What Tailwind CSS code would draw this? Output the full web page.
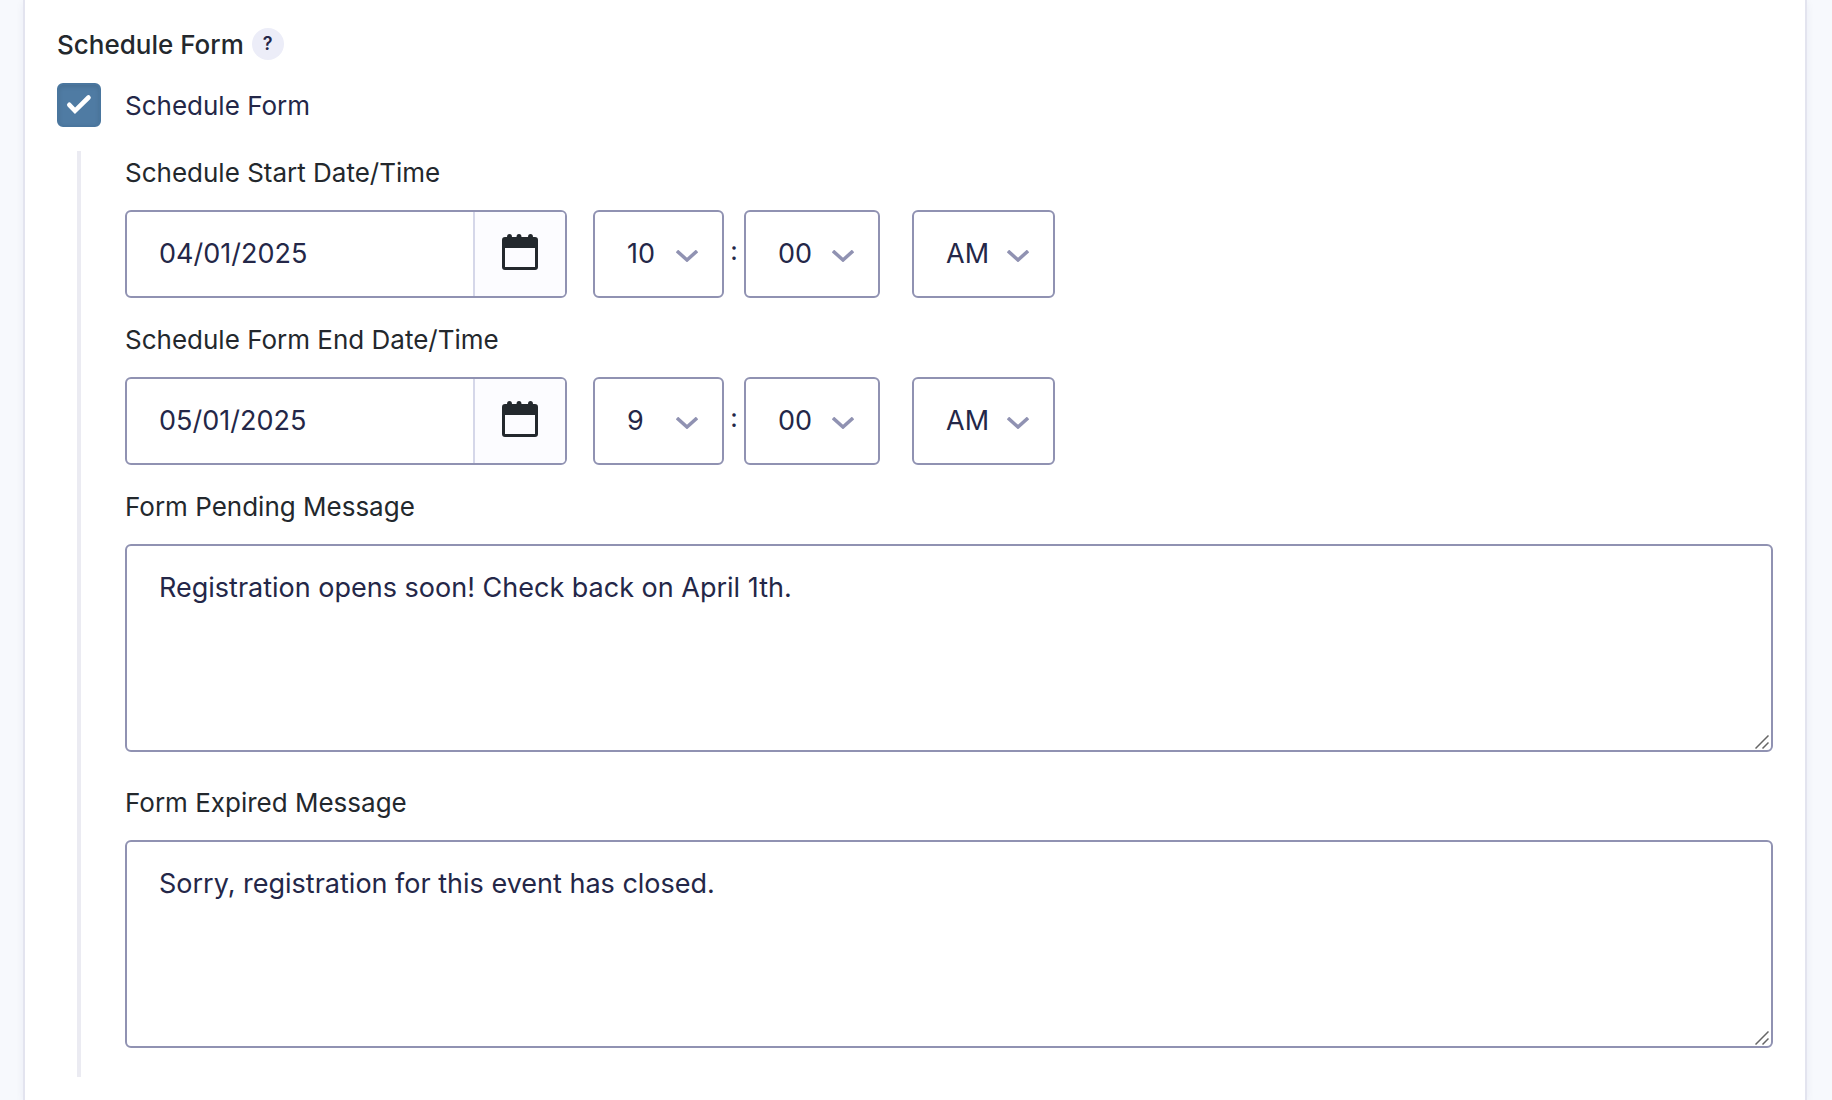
<!DOCTYPE html>
<html lang="en">
<head>
    <meta charset="UTF-8">
    <meta name="viewport" content="width=device-width, initial-scale=1.0">
    <title>Schedule Form</title>
    <script src="https://cdn.jsdelivr.net/npm/@tailwindcss/browser@4"></script>
</head>
<body class="bg-[#f7f9fd] pl-[23px] pr-[25px] font-[Inter,sans-serif] text-[#242748]">
    <main class="min-h-screen bg-white border-x-2 border-[#e3e4ef] shadow-[0_2px_8px_rgba(18,25,97,0.06)] px-8 pt-7 pb-5">

        <div class="flex items-center gap-2 h-8">
            <h1 class="pt-0.5 text-[26px] leading-8 font-medium text-[#23282d]">Schedule Form</h1>
            <button type="button" aria-label="Help" class="size-8 rounded-full bg-[#ecedf8] text-[18px] leading-8 font-semibold text-center">?</button>
        </div>

        <div class="flex items-center gap-6 mt-[23px]">
            <div class="relative size-11">
                <input type="checkbox" id="schedule" checked class="block size-11 appearance-none rounded-md bg-[#4f7ba3] border-2 border-[#4a769e] shadow-[inset_0_2px_4px_rgba(0,0,0,0.1)]">
                <svg class="absolute inset-0 size-11 pointer-events-none" viewBox="0 0 44 44" fill="none" stroke="#fff" stroke-width="4.6" stroke-linecap="round">
                    <path d="M12.3 21.8L18 27.8L31.5 14.5"/>
                </svg>
            </div>
            <label for="schedule" class="pt-0.5 text-[26px] leading-[30px]">Schedule Form</label>
        </div>

        <div class="mt-6 ml-5 border-l-4 border-[#ebebf2] pl-11 pt-[7px] pb-[29px]">

            <!-- Start date -->
            <label for="start-date" class="block text-[26px] leading-[30px] text-[#23282d]">Schedule Start Date/Time</label>
            <div class="flex items-center mt-[22px] text-[27px]">
                <div class="flex w-[442px] h-[88px] rounded-md border-2 border-[#9092b2] overflow-hidden">
                    <input type="text" id="start-date" value="04/01/2025" class="flex-1 min-w-0 px-8 outline-none">
                    <button type="button" aria-label="Pick start date" class="flex items-center justify-center w-[92px] border-l-2 border-[#d5d7e9] bg-[#fcfcff] pb-1">
                        <svg class="size-9" viewBox="0 0 36 36" fill="#23282d">
                            <path fill-rule="evenodd" d="M3 3H5A2.5 3 0 0 1 10 3H14.5A2.5 3 0 0 1 19.5 3H26A2.5 3 0 0 1 31 3H33A3 3 0 0 1 36 6V33A3 3 0 0 1 33 36H3A3 3 0 0 1 0 33V6A3 3 0 0 1 3 3ZM3 14V33H33V14Z"/>
                        </svg>
                    </button>
                </div>
                <div class="relative ml-[26px]">
                    <select aria-label="Start hour" class="block w-[131px] h-[88px] pl-8 appearance-none rounded-md border-2 border-[#9092b2] bg-white"><option>10</option></select>
                    <svg class="absolute right-[26px] top-10 w-[22px] h-3 pointer-events-none" viewBox="0 0 22 12" fill="none" stroke="#9092b2" stroke-width="3.5"><path d="M1 1L11 10L21 1"/></svg>
                </div>
                <span class="w-5 pb-2 text-center text-[26px]">:</span>
                <div class="relative">
                    <select aria-label="Start minute" class="block w-[136px] h-[88px] pl-8 appearance-none rounded-md border-2 border-[#9092b2] bg-white"><option>00</option></select>
                    <svg class="absolute right-[26px] top-10 w-[22px] h-3 pointer-events-none" viewBox="0 0 22 12" fill="none" stroke="#9092b2" stroke-width="3.5"><path d="M1 1L11 10L21 1"/></svg>
                </div>
                <div class="relative ml-8">
                    <select aria-label="Start AM or PM" class="block w-[143px] h-[88px] pl-8 appearance-none rounded-md border-2 border-[#9092b2] bg-white"><option>AM</option><option>PM</option></select>
                    <svg class="absolute right-[26px] top-10 w-[22px] h-3 pointer-events-none" viewBox="0 0 22 12" fill="none" stroke="#9092b2" stroke-width="3.5"><path d="M1 1L11 10L21 1"/></svg>
                </div>
            </div>

            <!-- End date -->
            <label for="end-date" class="block mt-[27px] text-[26px] leading-[30px] text-[#23282d]">Schedule Form End Date/Time</label>
            <div class="flex items-center mt-[22px] text-[27px]">
                <div class="flex w-[442px] h-[88px] rounded-md border-2 border-[#9092b2] overflow-hidden">
                    <input type="text" id="end-date" value="05/01/2025" class="flex-1 min-w-0 px-8 outline-none">
                    <button type="button" aria-label="Pick end date" class="flex items-center justify-center w-[92px] border-l-2 border-[#d5d7e9] bg-[#fcfcff] pb-1">
                        <svg class="size-9" viewBox="0 0 36 36" fill="#23282d">
                            <path fill-rule="evenodd" d="M3 3H5A2.5 3 0 0 1 10 3H14.5A2.5 3 0 0 1 19.5 3H26A2.5 3 0 0 1 31 3H33A3 3 0 0 1 36 6V33A3 3 0 0 1 33 36H3A3 3 0 0 1 0 33V6A3 3 0 0 1 3 3ZM3 14V33H33V14Z"/>
                        </svg>
                    </button>
                </div>
                <div class="relative ml-[26px]">
                    <select aria-label="End hour" class="block w-[131px] h-[88px] pl-8 appearance-none rounded-md border-2 border-[#9092b2] bg-white"><option>9</option></select>
                    <svg class="absolute right-[26px] top-10 w-[22px] h-3 pointer-events-none" viewBox="0 0 22 12" fill="none" stroke="#9092b2" stroke-width="3.5"><path d="M1 1L11 10L21 1"/></svg>
                </div>
                <span class="w-5 pb-2 text-center text-[26px]">:</span>
                <div class="relative">
                    <select aria-label="End minute" class="block w-[136px] h-[88px] pl-8 appearance-none rounded-md border-2 border-[#9092b2] bg-white"><option>00</option></select>
                    <svg class="absolute right-[26px] top-10 w-[22px] h-3 pointer-events-none" viewBox="0 0 22 12" fill="none" stroke="#9092b2" stroke-width="3.5"><path d="M1 1L11 10L21 1"/></svg>
                </div>
                <div class="relative ml-8">
                    <select aria-label="End AM or PM" class="block w-[143px] h-[88px] pl-8 appearance-none rounded-md border-2 border-[#9092b2] bg-white"><option>AM</option><option>PM</option></select>
                    <svg class="absolute right-[26px] top-10 w-[22px] h-3 pointer-events-none" viewBox="0 0 22 12" fill="none" stroke="#9092b2" stroke-width="3.5"><path d="M1 1L11 10L21 1"/></svg>
                </div>
            </div>

            <!-- Messages -->
            <label for="pending" class="block mt-[27px] text-[26px] leading-[30px] text-[#23282d]">Form Pending Message</label>
            <div class="relative mt-[22px]">
                <textarea id="pending" class="block w-full h-[208px] px-8 py-[22px] resize-none rounded-md border-2 border-[#9092b2] text-[27px] leading-10">Registration opens soon! Check back on April 1th.</textarea>
                <svg class="absolute right-1 bottom-[3px] size-[14px] pointer-events-none" viewBox="0 0 14 14" stroke="#666" stroke-width="1.5"><path d="M0.5 13.5L13.5 0.5M7.5 13.5L13.5 7.5"/></svg>
            </div>

            <label for="expired" class="block mt-9 text-[26px] leading-[30px] text-[#23282d]">Form Expired Message</label>
            <div class="relative mt-[22px]">
                <textarea id="expired" class="block w-full h-[208px] px-8 py-[22px] resize-none rounded-md border-2 border-[#9092b2] text-[27px] leading-10">Sorry, registration for this event has closed.</textarea>
                <svg class="absolute right-1 bottom-[3px] size-[14px] pointer-events-none" viewBox="0 0 14 14" stroke="#666" stroke-width="1.5"><path d="M0.5 13.5L13.5 0.5M7.5 13.5L13.5 7.5"/></svg>
            </div>
        </div>
    </main>
</body>
</html>
